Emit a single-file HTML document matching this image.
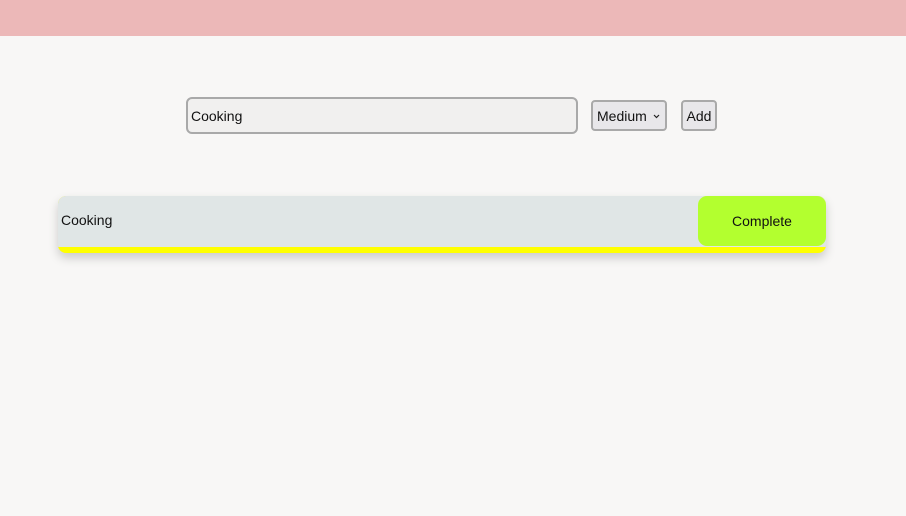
<!DOCTYPE html>
<html><head><style>
body{margin:0;width:906px;height:516px;background:#f8f7f6;font-family:"Liberation Sans",sans-serif;position:relative;overflow:hidden}
.top{position:absolute;left:0;top:0;width:906px;height:36px;background:#ecb8b8}
.inp{position:absolute;left:186px;top:97px;height:33px;border:2px solid #a9a9a9;border-radius:6px;background:#f1f0ef;box-sizing:content-box;font-size:14px;line-height:35px;padding-left:3px;width:385px;color:#111}
.sel{position:absolute;left:591px;top:100px;height:27px;border:2px solid #a9a9a9;border-radius:4px;background:#e8e7ea;font-size:14px;line-height:29px;padding-left:4px;box-sizing:content-box;width:68px;color:#111}
.sel svg{position:absolute;right:5px;top:12px}
.add{position:absolute;left:681px;top:100px;width:32px;height:27px;border:2px solid #a9a9a9;border-radius:4px;background:#e8e7ea;font-size:14px;line-height:29px;text-align:center;color:#111}
.card{position:absolute;left:58px;top:196px;width:768px;height:57px;border-radius:8px;background:#ffff00;box-shadow:0 5px 10px rgba(0,0,0,.18);overflow:hidden}
.gray{position:absolute;left:0;top:0;width:768px;height:51px;background:#e0e6e6}
.t{position:absolute;left:3px;top:16px;font-size:14px;color:#111}
.btn{position:absolute;left:640px;top:0;width:128px;height:50px;background:#b3ff2f;border-radius:9px;font-size:14px;text-align:center;line-height:51px;color:#111}
</style></head><body>
<div class="top"></div>
<div class="inp">Cooking</div>
<div class="sel">Medium<svg width="7" height="5" viewBox="0 0 7 5"><path d="M1 1L3.5 3.5L6 1" stroke="#222" stroke-width="1.2" fill="none"/></svg></div>
<div class="add">Add</div>
<div class="card"><div class="gray"></div><div class="t">Cooking</div><div class="btn">Complete</div></div>
</body></html>
